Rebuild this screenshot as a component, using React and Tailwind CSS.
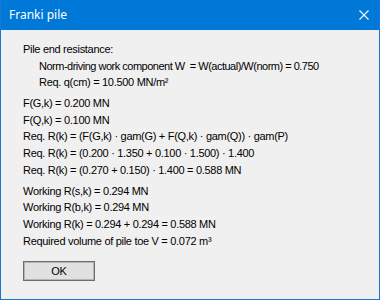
import React from 'react';

const Line = ({ children, indent, tight }) => (
  <div
    className={`h-[16.7px] leading-[16.7px] whitespace-pre ${indent ? 'pl-[16px]' : ''} ${
      tight ? 'tracking-[-0.5px]' : ''
    }`}
  >
    {children}
  </div>
);

const App = () => {
  return (
    <div className="w-[380px] h-[300px] flex flex-col border border-[#1a76d2] border-t-0 bg-[#f0f0f0] overflow-hidden">
      {/* Title bar */}
      <div className="h-[30px] shrink-0 bg-[#0078d7] flex items-center justify-between pl-[9px] pr-[10px] text-white -mx-px">
        <span className="text-[12px] font-['Noto_Sans',sans-serif] leading-none pb-px">Franki pile</span>
        <svg width="10" height="10" viewBox="0 0 10 10" className="mr-[1px]">
          <path d="M0.5 0.5 L9.5 9.5 M9.5 0.5 L0.5 9.5" stroke="#fff" strokeWidth="1.1" />
        </svg>
      </div>

      {/* Body */}
      <div className="flex-1 pl-[22px] pt-[11px] text-[11px] tracking-[-0.3px] text-black font-['Liberation_Sans',Arial,sans-serif]">
        <Line>Pile end resistance:</Line>
        <Line indent tight>Norm-driving work component W  = W(actual)/W(norm) = 0.750</Line>
        <Line indent>Req. q(cm) = 10.500 MN/m²</Line>

        <div className="h-[4px]" />
        <Line>F(G,k) = 0.200 MN</Line>
        <Line>F(Q,k) = 0.100 MN</Line>
        <Line>Req. R(k) = (F(G,k) · gam(G) + F(Q,k) · gam(Q)) · gam(P)</Line>
        <Line>Req. R(k) = (0.200 · 1.350 + 0.100 · 1.500) · 1.400</Line>
        <Line>Req. R(k) = (0.270 + 0.150) · 1.400 = 0.588 MN</Line>

        <div className="h-[4px]" />
        <Line>Working R(s,k) = 0.294 MN</Line>
        <Line>Working R(b,k) = 0.294 MN</Line>
        <Line>Working R(k) = 0.294 + 0.294 = 0.588 MN</Line>
        <Line>Required volume of pile toe V = 0.072 m³</Line>

        <button className="mt-[12px] w-[72px] h-[20px] border border-[#6d6d6d] shadow-[inset_0_0_0_1px_#b5b5b5] bg-[#e1e1e1] text-[11px] leading-none flex items-center justify-center">
          OK
        </button>
      </div>
    </div>
  );
};

export default App;
